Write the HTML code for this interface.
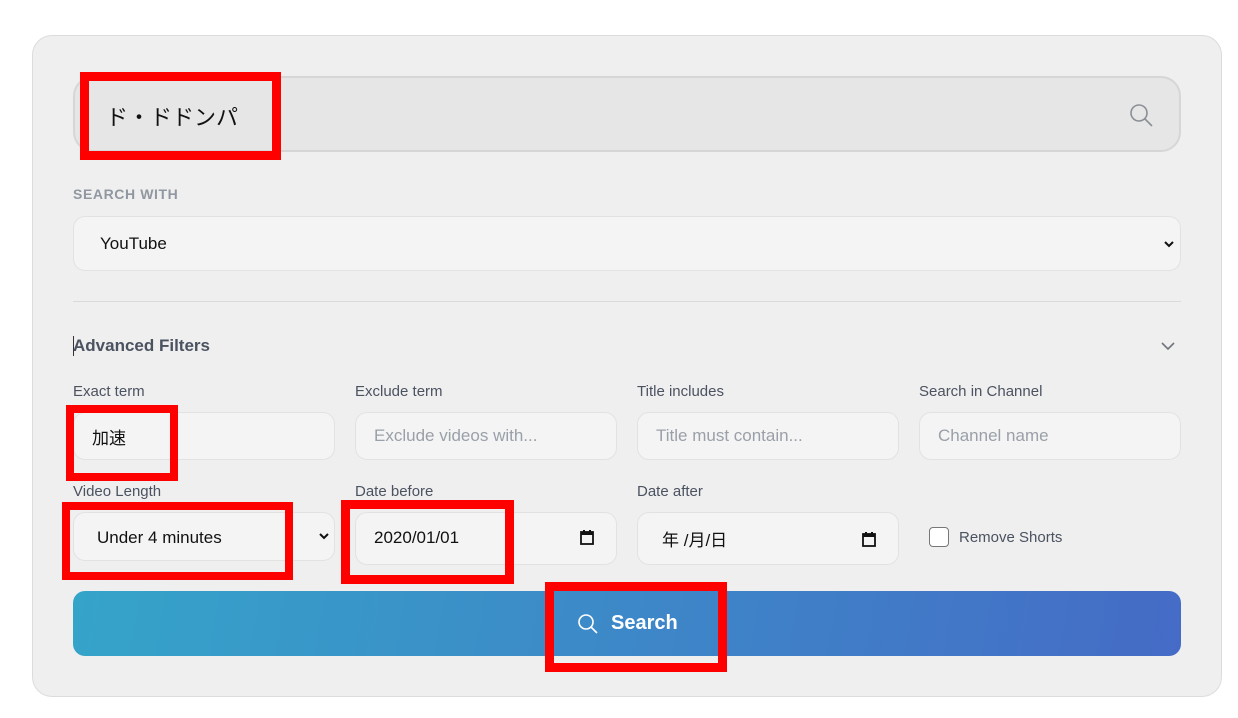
<!DOCTYPE html>
<html><head><meta charset="utf-8"><style>
*{box-sizing:border-box;margin:0;padding:0}
body{width:1238px;height:718px;background:#fff;position:relative;overflow:hidden;font-family:"Liberation Sans","Noto Sans CJK JP",sans-serif;}
.a{position:absolute}
.panel{left:32px;top:35px;width:1190px;height:662px;background:#efefef;border:1px solid #dcdcdc;border-radius:20px}
.inp{position:absolute;background:#f4f4f4;border:1px solid #e2e2e2;border-radius:12px;font-size:17px;color:#9aa0a8;padding-left:18px;display:flex;align-items:center}
.lbl{position:absolute;font-size:15px;color:#4b5260}
.red{position:absolute;border:9px solid #ff0000}
.dark{color:#111}
</style></head><body>
<div class="a panel"></div>
<div class="a" style="left:73px;top:76px;width:1108px;height:76px;background:#e6e6e6;border:2px solid #d6d6d6;border-radius:20px"></div>
<div class="a" style="left:106px;top:100px;font-size:22px;color:#111">ド・ドドンパ</div>
<svg class="a" style="left:1128px;top:102px" width="26" height="26" viewBox="0 0 26 26" fill="none" stroke="#8a8f96" stroke-width="1.6"><circle cx="11" cy="11" r="8"/><path d="M17 17l7 7"/></svg>
<div class="a" style="left:73px;top:186px;font-size:14px;font-weight:bold;color:#9097a0;letter-spacing:.6px">SEARCH WITH</div>
<div class="inp dark" style="left:73px;top:216px;width:1108px;height:55px;padding-left:26px;font-size:17px">YouTube</div>
<svg class="a" style="left:1163px;top:239px" width="12" height="10" viewBox="0 0 12 10" fill="none" stroke="#111" stroke-width="2"><path d="M2 3l4 4 4-4"/></svg>
<div class="a" style="left:73px;top:301px;width:1108px;height:1px;background:#dadada"></div>
<div class="a" style="left:73px;top:336px;font-size:17px;font-weight:bold;color:#4b5260">Advanced Filters</div>
<div class="a" style="left:73px;top:336px;width:1px;height:20px;background:#333"></div>
<svg class="a" style="left:1160px;top:340px" width="16" height="12" viewBox="0 0 16 12" fill="none" stroke="#6f757d" stroke-width="1.6"><path d="M2 3l6 6 6-6"/></svg>
<div class="lbl" style="left:73px;top:383px">Exact term</div>
<div class="lbl" style="left:355px;top:383px">Exclude term</div>
<div class="lbl" style="left:637px;top:383px">Title includes</div>
<div class="lbl" style="left:919px;top:383px">Search in Channel</div>
<div class="inp dark" style="left:73px;top:412px;width:262px;height:48px">加速</div>
<div class="inp" style="left:355px;top:412px;width:262px;height:48px">Exclude videos with...</div>
<div class="inp" style="left:637px;top:412px;width:262px;height:48px">Title must contain...</div>
<div class="inp" style="left:919px;top:412px;width:262px;height:48px">Channel name</div>
<div class="lbl" style="left:73px;top:483px">Video Length</div>
<div class="lbl" style="left:355px;top:483px">Date before</div>
<div class="lbl" style="left:637px;top:483px">Date after</div>
<div class="inp dark" style="left:73px;top:512px;width:262px;height:49px;padding-left:23px;font-size:17px;padding-top:3px">Under 4 minutes</div>
<svg class="a" style="left:318px;top:531px" width="12" height="10" viewBox="0 0 12 10" fill="none" stroke="#111" stroke-width="2"><path d="M2 3l4 4 4-4"/></svg>
<div class="inp dark" style="left:355px;top:512px;width:262px;height:53px;font-size:17px;padding-bottom:2px">2020/01/01</div>
<div class="inp dark" style="left:637px;top:512px;width:262px;height:53px;font-size:17px;padding-left:24px">年 /月/日</div>
<svg class="a" style="left:580px;top:529px" width="14" height="16" viewBox="0 0 14 16"><rect x="1" y="3" width="12" height="12" fill="none" stroke="#111" stroke-width="1.8"/><rect x="1" y="3" width="12" height="3" fill="#111"/><rect x="3" y="1" width="2" height="3" fill="#111"/><rect x="9" y="1" width="2" height="3" fill="#111"/></svg>
<svg class="a" style="left:862px;top:531px" width="14" height="16" viewBox="0 0 14 16"><rect x="1" y="3" width="12" height="12" fill="none" stroke="#111" stroke-width="1.8"/><rect x="1" y="3" width="12" height="3" fill="#111"/><rect x="3" y="1" width="2" height="3" fill="#111"/><rect x="9" y="1" width="2" height="3" fill="#111"/></svg>
<div class="a" style="left:929px;top:527px;width:20px;height:20px;border:1.5px solid #777;border-radius:4px;background:#fff"></div>
<div class="a" style="left:959px;top:529px;font-size:15px;color:#4b5260">Remove Shorts</div>
<div class="a" style="left:73px;top:591px;width:1108px;height:65px;border-radius:12px;background:linear-gradient(100deg,#35a4c9,#3d88c8 50%,#456bc6)"></div>
<svg class="a" style="left:576px;top:612px" width="24" height="24" viewBox="0 0 24 24" fill="none" stroke="#fff" stroke-width="1.6"><circle cx="10" cy="10" r="7"/><path d="M15 15l6 6"/></svg>
<div class="a" style="left:611px;top:612px;font-size:20px;font-weight:bold;color:#fff">Search</div>
<div class="red" style="left:80px;top:72px;width:201px;height:88px"></div>
<div class="red" style="left:66px;top:405px;width:112px;height:76px;border-width:8px"></div>
<div class="red" style="left:62px;top:502px;width:231px;height:78px;border-width:8px"></div>
<div class="red" style="left:341px;top:500px;width:173px;height:84px"></div>
<div class="red" style="left:545px;top:582px;width:182px;height:90px"></div>
</body></html>
